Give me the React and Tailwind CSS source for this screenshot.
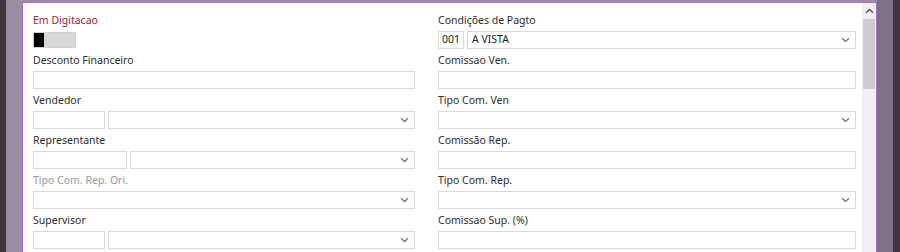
import React from 'react';

function Chevron() {
  return (
    <svg className="h-[6px] w-[9px]" viewBox="0 0 9 6" fill="none">
      <path d="M1 1.2l3.5 3.3L8 1.2" stroke="#7a7a7a" strokeWidth="1.4" />
    </svg>
  );
}

function Label({ children, tone = 'normal' }) {
  const color =
    tone === 'red' ? 'text-[#a5232d]' : tone === 'muted' ? 'text-[#9a9a9a]' : 'text-[#2e2e2e]';
  return <div className={`h-[20px] pt-[1px] flex items-center ${color}`}>{children}</div>;
}

function Input({ className = '', children }) {
  return (
    <div
      className={`h-[18px] border border-[#dadada] bg-white flex items-center px-[4px] text-[#1f1f1f] ${className}`}
    >
      {children}
    </div>
  );
}

function Select({ className = '', children }) {
  return (
    <div
      className={`h-[18px] border border-[#dadada] bg-white flex items-center justify-between pl-[4px] pr-[5px] text-[#1f1f1f] ${className}`}
    >
      <span>{children}</span>
      <Chevron />
    </div>
  );
}

function Field({ label, tone, children }) {
  return (
    <div className="h-[40px]">
      <Label tone={tone}>{label}</Label>
      <div className="mt-[1px] flex gap-[3px]">{children}</div>
    </div>
  );
}

export default function App() {
  return (
    <div
      className="flex h-[252px] w-[900px] overflow-hidden bg-[#9b8ea0] text-[10.5px]"
      style={{ fontFamily: '"Noto Sans", sans-serif' }}
    >
      <div className="w-[6px] bg-[#3e3541]" />
      <div className="w-[16px] bg-[#9b8ea0]" />

      {/* main panel */}
      <div className="mt-[2px] flex w-[855px] border-l border-r border-t border-[#a96ad8] bg-white">
        <div className="flex flex-1 gap-[23px] pl-[10px] pr-[6px] pt-[7px]">
          {/* left column */}
          <div className="w-[382px]">
            <Field label="Em Digitacao" tone="red">
              <div className="flex h-[18px] items-center">
                <div className="flex h-[16px] w-[43px] border border-[#d0d0d0] bg-[#d9d9d9]">
                  <div className="w-[10px] bg-black" />
                </div>
              </div>
            </Field>
            <Field label="Desconto Financeiro">
              <Input className="flex-1" />
            </Field>
            <Field label="Vendedor">
              <Input className="w-[72px]" />
              <Select className="flex-1" />
            </Field>
            <Field label="Representante">
              <Input className="w-[94px]" />
              <Select className="flex-1" />
            </Field>
            <Field label="Tipo Com. Rep. Ori." tone="muted">
              <Select className="flex-1" />
            </Field>
            <Field label="Supervisor">
              <Input className="w-[72px]" />
              <Select className="flex-1" />
            </Field>
          </div>

          {/* right column */}
          <div className="flex-1">
            <Field label="Condições de Pagto">
              <Input className="w-[26px] justify-center px-0">001</Input>
              <Select className="flex-1">A VISTA</Select>
            </Field>
            <Field label="Comissao Ven.">
              <Input className="flex-1" />
            </Field>
            <Field label="Tipo Com. Ven">
              <Select className="flex-1" />
            </Field>
            <Field label="Comissão Rep.">
              <Input className="flex-1" />
            </Field>
            <Field label="Tipo Com. Rep.">
              <Select className="flex-1" />
            </Field>
            <Field label="Comissao Sup. (%)">
              <Input className="flex-1" />
            </Field>
          </div>
        </div>

        {/* scrollbar */}
        <div className="flex w-[14px] flex-col bg-[#f0f0f0]">
          <div className="flex h-[16px] items-center justify-center">
            <svg className="h-[6px] w-[9px]" viewBox="0 0 9 6" fill="none">
              <path d="M1 4.8l3.5-3.3L8 4.8" stroke="#555" strokeWidth="1.5" />
            </svg>
          </div>
          <div className="mx-[1px] h-[70px] bg-[#cdcdcd]" />
        </div>
      </div>

      <div className="w-[16px] bg-[#7e7089]" />
      <div className="w-[7px] bg-[#3e3541]" />
    </div>
  );
}
